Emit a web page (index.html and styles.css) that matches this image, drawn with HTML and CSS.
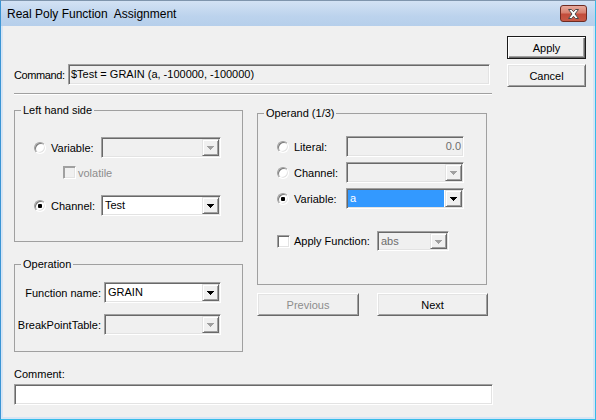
FILE: index.html
```html
<!DOCTYPE html>
<html>
<head>
<meta charset="utf-8">
<link rel="stylesheet" href="styles.css">
</head>
<body>
<div class="window">
  <div class="titlebar">
    <span class="title">Real Poly Function  Assignment</span>
    <div class="close">
      <svg width="13" height="10" viewBox="0 0 13 10"><path d="M1.5 0.5h3l2 2.2 2-2.2h3l-3.5 4.5 3.5 4.5h-3l-2-2.2-2 2.2h-3l3.5-4.5z" fill="#fff" stroke="#4a4a4a" stroke-width="1" stroke-linejoin="round"/></svg>
    </div>
  </div>
  <div class="frame">
    <div class="client">
      <div class="main">
        <div class="cmd-row">
          <span class="cmd-label">Command:</span>
          <div class="edit ro cmd-edit">$Test = GRAIN (a, -100000, -100000)</div>
        </div>
        <div class="sep"></div>
        <div class="cols">
          <div class="col-left">
            <div class="group lhs">
              <div class="caption">Left hand side</div>
              <div class="row r-var">
                <span class="radio"></span><span class="lbl w50">Variable:</span>
                <div class="combo dis w120"><span class="val"></span><span class="dd"><svg width="7" height="4"><path d="M0 0h7v1h-1v1h-1v1h-1v1h-1v-1h-1v-1h-1v-1h-1z"/></svg></span></div>
              </div>
              <div class="row r-vol">
                <span class="check dis vol-check"></span><span class="lbl dim vol-lbl">volatile</span>
              </div>
              <div class="row r-ch">
                <span class="radio on"></span><span class="lbl w50">Channel:</span>
                <div class="combo w120"><span class="val">Test</span><span class="dd"><svg width="7" height="4"><path d="M0 0h7v1h-1v1h-1v1h-1v1h-1v-1h-1v-1h-1v-1h-1z"/></svg></span></div>
              </div>
            </div>
            <div class="group opn">
              <div class="caption">Operation</div>
              <div class="row r-fn">
                <span class="lbl rlbl">Function name:</span>
                <div class="combo w117"><span class="val">GRAIN</span><span class="dd"><svg width="7" height="4"><path d="M0 0h7v1h-1v1h-1v1h-1v1h-1v-1h-1v-1h-1v-1h-1z"/></svg></span></div>
              </div>
              <div class="row r-bp">
                <span class="lbl rlbl">BreakPointTable:</span>
                <div class="combo dis w117"><span class="val"></span><span class="dd"><svg width="7" height="4"><path d="M0 0h7v1h-1v1h-1v1h-1v1h-1v-1h-1v-1h-1v-1h-1z"/></svg></span></div>
              </div>
            </div>
          </div>
          <div class="col-right">
            <div class="group operand">
              <div class="caption">Operand (1/3)</div>
              <div class="row r-lit">
                <span class="radio"></span><span class="lbl w52">Literal:</span>
                <div class="edit ro lit-edit">0.0</div>
              </div>
              <div class="row r-och">
                <span class="radio"></span><span class="lbl w52">Channel:</span>
                <div class="combo dis w118"><span class="val"></span><span class="dd"><svg width="7" height="4"><path d="M0 0h7v1h-1v1h-1v1h-1v1h-1v-1h-1v-1h-1v-1h-1z"/></svg></span></div>
              </div>
              <div class="row r-ovar">
                <span class="radio on"></span><span class="lbl w52">Variable:</span>
                <div class="combo w118"><span class="val sel">a</span><span class="dd"><svg width="7" height="4"><path d="M0 0h7v1h-1v1h-1v1h-1v1h-1v-1h-1v-1h-1v-1h-1z"/></svg></span></div>
              </div>
              <div class="row r-apf">
                <span class="check apf-check"></span><span class="lbl w83">Apply Function:</span>
                <div class="combo dis w72 h20"><span class="val dimval">abs</span><span class="dd"><svg width="7" height="4"><path d="M0 0h7v1h-1v1h-1v1h-1v1h-1v-1h-1v-1h-1v-1h-1z"/></svg></span></div>
              </div>
            </div>
            <div class="nav">
              <div class="btn prev dimtxt">Previous</div>
              <div class="btn next">Next</div>
            </div>
          </div>
        </div>
        <div class="cmt-label">Comment:</div>
        <div class="edit cmt-edit"></div>
      </div>
      <div class="side">
        <div class="btn def">Apply</div>
        <div class="btn">Cancel</div>
      </div>
    </div>
  </div>
</div>
</body>
</html>
```
FILE: styles.css
```css
html, body {
  margin: 0;
  padding: 0;
  background: #f0f0f0;
}
body {
  font-family: "Liberation Sans", Arial, sans-serif;
  font-size: 11px;
  color: #000;
}
.window {
  width: 596px;
  height: 420px;
  box-sizing: border-box;
  display: flex;
  flex-direction: column;
  border-top: 1px solid #7f95ad;
  border-left: 1px solid #3b95d4;
  border-right: 1px solid #36bce8;
  border-bottom: 1px solid #36bce8;
  background: #d6e5f5;
}
.titlebar {
  height: 25px;
  flex: none;
  display: flex;
  align-items: flex-start;
  background: linear-gradient(#d3e2f4, #bcd3ed 60%, #b6cfeb);
}
.title {
  white-space: pre;
  font-size: 12px;
  line-height: 14px;
  margin: 6px 0 0 6px;
}
.close {
  margin: 4px 8px 0 auto;
  width: 27px;
  height: 17px;
  box-sizing: border-box;
  border: 1px solid #6e2b22;
  border-radius: 3px;
  background: linear-gradient(#e8ab9e, #d7806f 45%, #c24c3b 55%, #c75a46);
  display: flex;
  align-items: center;
  justify-content: center;
}
.close svg { display: block; }
.frame {
  flex: 1;
  display: flex;
  padding: 0 2px 2px 2px;
}
.client {
  flex: 1;
  display: flex;
  background: #f0f0f0;
}
.main {
  margin-left: 11px;
  width: 479px;
  padding-top: 38px;
  display: flex;
  flex-direction: column;
}
.side {
  margin-left: 14px;
  padding-top: 10px;
  display: flex;
  flex-direction: column;
  gap: 5px;
}
/* generic controls */
.edit {
  box-sizing: border-box;
  height: 21px;
  border: 1px solid;
  border-color: #a0a0a0 #fff #fff #a0a0a0;
  box-shadow: inset 1px 1px 0 #696969, inset -1px -1px 0 #e3e3e3;
  background: #fff;
  line-height: 19px;
  padding: 0 3px;
  white-space: nowrap;
  overflow: hidden;
}
.edit.ro { background: #f0f0f0; }
.combo {
  box-sizing: border-box;
  height: 21px;
  border: 1px solid;
  border-color: #a0a0a0 #fff #fff #a0a0a0;
  box-shadow: inset 1px 1px 0 #696969, inset -1px -1px 0 #e3e3e3;
  background: #fff;
  padding: 1px;
  display: flex;
  flex: none;
}
.combo.dis { background: #f0f0f0; }
.combo.h20 { height: 20px; }
.combo .val {
  flex: 1;
  line-height: 17px;
  padding-left: 2px;
  white-space: nowrap;
}
.combo.h20 .val { line-height: 16px; }
.combo .val.sel {
  background: #3399ff;
  color: #fff;
  margin-right: 1px;
}
.combo .val.dimval { color: #6d6d6d; }
.dd {
  width: 17px;
  flex: none;
  box-sizing: border-box;
  border: 1px solid;
  border-color: #e3e3e3 #696969 #696969 #e3e3e3;
  box-shadow: inset 1px 1px 0 #fff, inset -1px -1px 0 #a0a0a0;
  background: #f0f0f0;
  display: flex;
  align-items: center;
  justify-content: center;
}
.dd svg { display: block; fill: #000; margin-top: 1px; }
.combo.dis .dd svg { fill: #a0a0a0; }
.radio {
  width: 12px;
  height: 12px;
  box-sizing: border-box;
  border-radius: 50%;
  border: 1px solid;
  border-color: #a0a0a0 #fff #fff #a0a0a0;
  box-shadow: inset 1px 1px 0 #7a7a7a, inset -1px -1px 0 #e3e3e3;
  background: #fff;
  flex: none;
  position: relative;
  margin-left: 19px;
  margin-right: 5px;
}
.radio.on::after {
  content: "";
  position: absolute;
  left: 3px;
  top: 3px;
  width: 4px;
  height: 4px;
  border-radius: 1px;
  background: #000;
}
.check {
  width: 13px;
  height: 13px;
  box-sizing: border-box;
  border: 1px solid;
  border-color: #a0a0a0 #fff #fff #a0a0a0;
  box-shadow: inset 1px 1px 0 #696969, inset -1px -1px 0 #e3e3e3;
  background: #fff;
  flex: none;
}
.check.dis { background: #f0f0f0; box-shadow: inset 1px 1px 0 #a0a0a0, inset -1px -1px 0 #e3e3e3; }
.lbl { white-space: nowrap; flex: none; }
.dim { color: #8d8d8d; }
.w50 { width: 50px; }
.w52 { width: 52px; }
.w83 { width: 83px; }
.w120 { width: 120px; }
.w117 { width: 117px; }
.w118 { width: 118px; }
.w72 { width: 72px; }
.btn {
  box-sizing: border-box;
  width: 79px;
  height: 23px;
  border: 1px solid;
  border-color: #fff #696969 #696969 #fff;
  box-shadow: inset 1px 1px 0 #e3e3e3, inset -1px -1px 0 #a0a0a0;
  background: #f0f0f0;
  display: flex;
  align-items: center;
  justify-content: center;
}
.btn.def {
  border-color: #1a1a1a;
  box-shadow: inset 1px 1px 0 #fff, inset -1px -1px 0 #696969, inset -2px -2px 0 #a0a0a0;
}
.dimtxt { color: #8d8d8d; }
/* command row */
.cmd-row {
  display: flex;
  align-items: center;
  height: 21px;
}
.cmd-label { width: 54px; flex: none; letter-spacing: -0.4px; }
.cmd-edit { width: 422px; padding-left: 2px; }
.sep {
  margin-top: 8px;
  width: 478px;
  border-top: 1px solid #a0a0a0;
  border-bottom: 1px solid #fff;
}
.cols { display: flex; }
.col-left { width: 229px; display: flex; flex-direction: column; }
.col-right { width: 231px; margin-left: 14px; display: flex; flex-direction: column; }
.group {
  box-sizing: border-box;
  border: 1px solid #a0a0a0;
  display: flex;
  flex-direction: column;
}
.caption {
  width: fit-content;
  margin: -7px 0 0 6px;
  padding: 0 2px;
  line-height: 13px;
  background: #f0f0f0;
}
.row {
  display: flex;
  align-items: center;
  height: 21px;
}
.lhs { margin-top: 15px; height: 132px; }
.r-var { margin-top: 20px; }
.r-vol { margin-top: 8px; height: 13px; }
.vol-check { margin-left: 48px; }
.vol-lbl { margin-left: 2px; }
.r-ch { margin-top: 16px; }
.opn { margin-top: 22px; height: 88px; }
.r-fn { margin-top: 11px; }
.r-bp { margin-top: 11px; }
.rlbl { width: 86px; text-align: right; margin-right: 3px; }
.operand { margin-top: 18px; height: 172px; width: 230px; }
.r-lit { margin-top: 16px; }
.lit-edit { width: 118px; text-align: right; color: #6d6d6d; padding-right: 2px; }
.r-och { margin-top: 5px; }
.r-ovar { margin-top: 5px; }
.r-apf { margin-top: 22px; height: 20px; }
.apf-check { margin-left: 19px; margin-right: 4px; }
.nav {
  margin-top: 8px;
  display: flex;
  justify-content: space-between;
}
.nav .prev { width: 102px; }
.nav .next { width: 111px; }
.cmt-label {
  margin-top: 16px;
  line-height: 13px;
}
.cmt-edit {
  margin-top: 3px;
  width: 479px;
}
```
